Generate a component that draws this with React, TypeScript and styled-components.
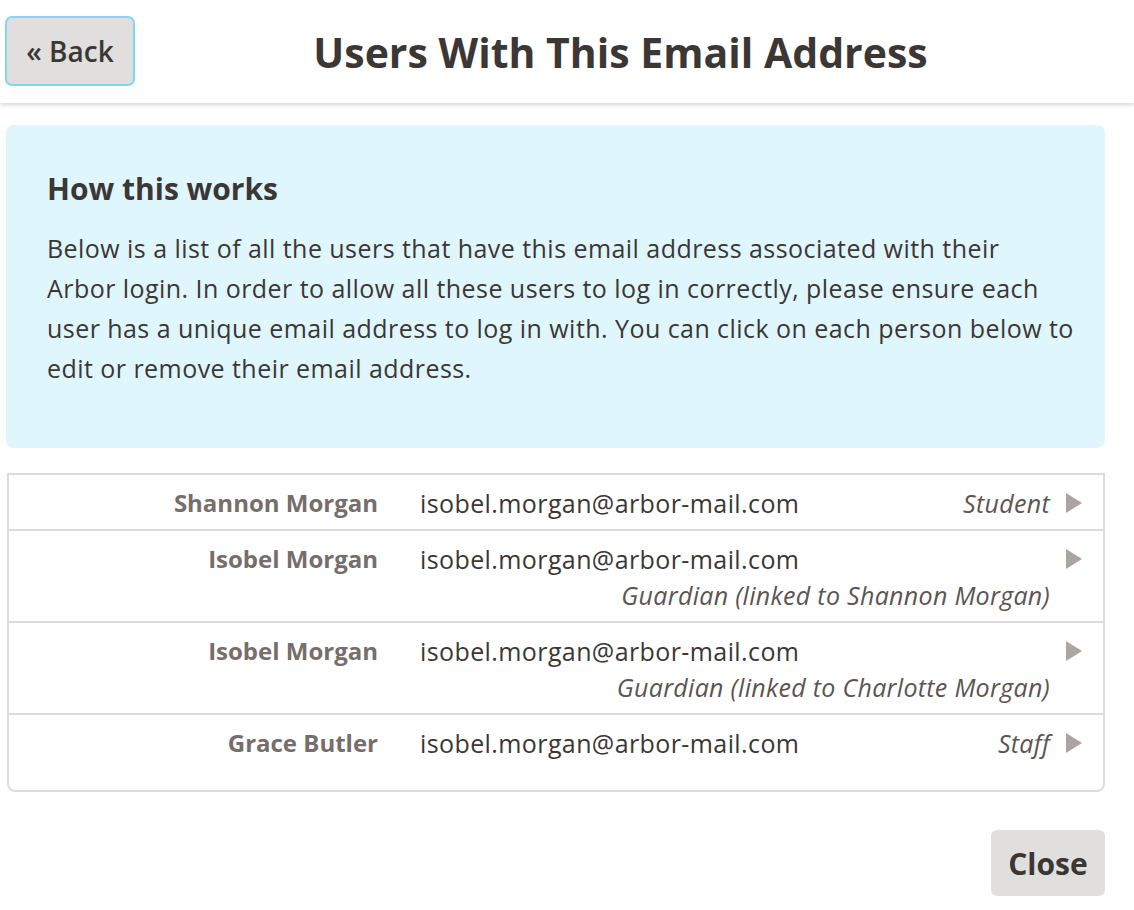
import React from "react";
import styled, { createGlobalStyle } from "styled-components";

type User = {
  name: string;
  email: string;
  role: string;
};

const users: User[] = [
  { name: "Shannon Morgan", email: "isobel.morgan@arbor-mail.com", role: "Student" },
  {
    name: "Isobel Morgan",
    email: "isobel.morgan@arbor-mail.com",
    role: "Guardian (linked to Shannon Morgan)",
  },
  {
    name: "Isobel Morgan",
    email: "isobel.morgan@arbor-mail.com",
    role: "Guardian (linked to Charlotte Morgan)",
  },
  { name: "Grace Butler", email: "isobel.morgan@arbor-mail.com", role: "Staff" },
];

const infoLines = [
  "Below is a list of all the users that have this email address associated with their",
  "Arbor login. In order to allow all these users to log in correctly, please ensure each",
  "user has a unique email address to log in with. You can click on each person below to",
  "edit or remove their email address.",
];

const Global = createGlobalStyle`
  body {
    margin: 0;
    background: #fff;
    font-family: "Open Sans", "Noto Sans", sans-serif;
    color: #3b3735;
  }
  button {
    font-family: "Open Sans", "Noto Sans", sans-serif;
  }
`;

const App = () => {
  return (
    <Page>
      <Global />
      <Header>
        <BackButton>« Back</BackButton>
        <Title>Users With This Email Address</Title>
      </Header>
      <Content>
        <InfoBox>
          <InfoTitle>How this works</InfoTitle>
          <InfoText>
            {infoLines.map((line, i) => (
              <React.Fragment key={i}>
                {line}
                {i < infoLines.length - 1 && <br />}
              </React.Fragment>
            ))}
          </InfoText>
        </InfoBox>
        <Table>
          {users.map((u, i) => (
            <Row key={i} last={i === users.length - 1}>
              <Name>{u.name}</Name>
              <Details>
                <Email>{u.email}</Email>
                <Role>{u.role}</Role>
              </Details>
              <Arrow viewBox="0 0 16 20">
                <path d="M0 0 L16 10 L0 20 Z" fill="#aba6a3" />
              </Arrow>
            </Row>
          ))}
        </Table>
        <Footer>
          <CloseButton>Close</CloseButton>
        </Footer>
      </Content>
    </Page>
  );
};

export default App;

const Page = styled.div`
  width: 1134px;
  min-height: 910px;
`;

const Header = styled.div`
  height: 103px;
  display: flex;
  align-items: center;
  padding: 0 28px 0 5px;
  box-sizing: border-box;
  box-shadow: 0 2px 4px rgba(0, 0, 0, 0.16);
  position: relative;
`;

const BackButton = styled.button`
  width: 130px;
  height: 70px;
  margin-top: -2px;
  background: #e0dfdd;
  border: 2px solid #7fd8f2;
  border-radius: 7px;
  font-weight: 600;
  font-size: 28px;
  color: #3b3735;
  cursor: pointer;
`;

const Title = styled.h1`
  flex: 1;
  margin: 0;
  text-align: center;
  font-weight: 700;
  font-size: 41px;
  color: #3b3735;
`;

const Content = styled.div`
  padding: 22px 29px 0 6px;
`;

const InfoBox = styled.div`
  background: #dff6fd;
  border-radius: 8px;
  height: 323px;
  box-sizing: border-box;
  padding: 44px 20px 0 41px;
`;

const InfoTitle = styled.h2`
  margin: 0 0 19px;
  font-size: 30px;
  font-weight: 700;
  line-height: 40px;
  color: #3b3735;
`;

const InfoText = styled.p`
  margin: 0;
  font-size: 25px;
  letter-spacing: 0.45px;
  line-height: 40px;
  white-space: nowrap;
  color: #3b3735;
`;

const Table = styled.div`
  margin-top: 25px;
  margin-left: 1px;
  border: 2px solid #dddcdb;
  border-radius: 0 0 8px 8px;
  padding-bottom: 21px;
`;

const Row = styled.div<{ last?: boolean }>`
  display: flex;
  align-items: flex-start;
  padding: 10px 21px 8px 0;
  border-bottom: ${({ last }) => (last ? "none" : "2px solid #dddcdb")};
  cursor: pointer;
  font-size: 24px;
  line-height: 36px;
`;

const Name = styled.div`
  width: 369px;
  flex-shrink: 0;
  text-align: right;
  font-weight: 700;
  color: #756e6a;
`;

const Details = styled.div`
  flex: 1;
  display: flex;
  flex-wrap: wrap;
  margin-left: 42px;
  column-gap: 20px;
`;

const Email = styled.span`
  font-size: 25px;
  letter-spacing: 0.4px;
  color: #3b3735;
`;

const Role = styled.span`
  margin-left: auto;
  font-size: 25px;
  letter-spacing: 0.3px;
  font-style: italic;
  color: #5b5552;
`;

const Arrow = styled.svg`
  width: 16px;
  height: 20px;
  margin: 8px 0 0 16px;
  flex-shrink: 0;
`;

const Footer = styled.div`
  display: flex;
  justify-content: flex-end;
  margin-top: 38px;
`;

const CloseButton = styled.button`
  width: 114px;
  height: 66px;
  background: #e0dfdd;
  border: none;
  border-radius: 6px;
  font-weight: 700;
  font-size: 30px;
  color: #3b3735;
  cursor: pointer;
`;
